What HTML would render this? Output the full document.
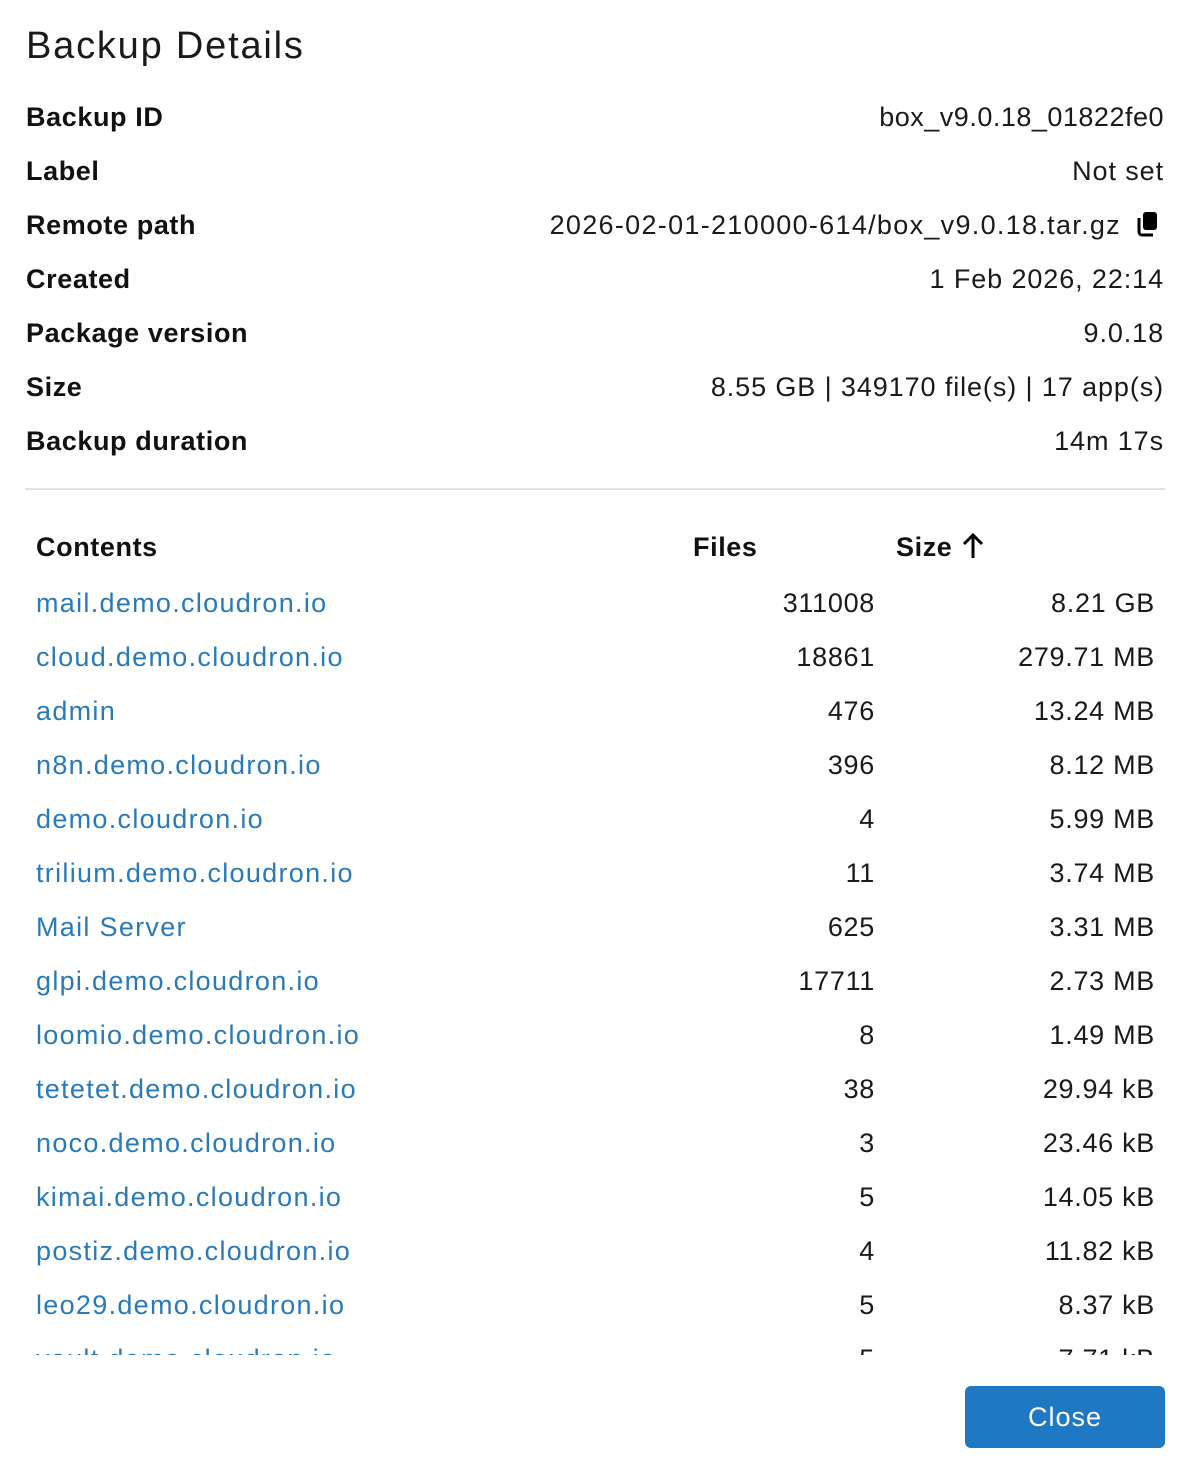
<!DOCTYPE html>
<html><head><meta charset="utf-8"><style>
body{margin:0;width:1189px;height:1470px;background:#fff;font-family:"Liberation Sans",sans-serif;color:#1a1a1a;position:relative;overflow:hidden}
.a{position:absolute;white-space:nowrap;font-size:27px;line-height:32px}
.t{left:26px;top:22px;font-size:38px;line-height:48px;letter-spacing:1.8px}
.l{left:26px;font-weight:bold;letter-spacing:0.6px;color:#111}.r{right:25px;text-align:right;letter-spacing:0.9px}
.hr{position:absolute;left:25px;width:1140px;top:488px;height:2px;background:#e2e2e2}
.clip{position:absolute;left:0;top:510px;width:1189px;height:845px;overflow:hidden}
.n{left:36px;color:#2a7ab8;letter-spacing:1.3px}.f{right:314px;text-align:right;letter-spacing:0.7px}.s{right:34px;text-align:right;letter-spacing:0.7px}
.h{font-weight:bold;letter-spacing:0.6px;color:#111}
.btn{position:absolute;left:965px;top:1386px;width:200px;height:62px;background:#1e78c2;border-radius:6px;color:#fff;font-size:27px;line-height:62px;text-align:center;letter-spacing:1px}
</style></head><body>
<div class="a t">Backup Details</div>
<div class="a l" style="top:101px">Backup ID</div><div class="a r" style="top:101px;letter-spacing:0.5px">box_v9.0.18_01822fe0</div>
<div class="a l" style="top:155px">Label</div><div class="a r" style="top:155px">Not set</div>
<div class="a l" style="top:209px">Remote path</div><div class="a r" style="top:209px;right:68px;letter-spacing:1.3px">2026-02-01-210000-614/box_v9.0.18.tar.gz</div>
<svg style="position:absolute;left:1134px;top:210px" width="28" height="28" viewBox="0 0 28 28"><rect x="9" y="2" width="14" height="18" rx="3" fill="#000"/><path d="M5 8v14a3 3 0 0 0 3 3h11" stroke="#000" stroke-width="3" fill="none"/></svg>
<div class="a l" style="top:263px">Created</div><div class="a r" style="top:263px">1 Feb 2026, 22:14</div>
<div class="a l" style="top:317px">Package version</div><div class="a r" style="top:317px">9.0.18</div>
<div class="a l" style="top:371px">Size</div><div class="a r" style="top:371px">8.55 GB | 349170 file(s) | 17 app(s)</div>
<div class="a l" style="top:425px">Backup duration</div><div class="a r" style="top:425px">14m 17s</div>
<div class="hr"></div>
<div class="clip">
<div class="a h" style="left:36px;top:21px">Contents</div>
<div class="a h" style="left:693px;top:21px">Files</div>
<div class="a h" style="left:896px;top:21px">Size <svg width="24" height="28" viewBox="0 0 24 28" style="vertical-align:-4px"><path d="M12 26V4M3 12l9-9 9 9" stroke="#000" stroke-width="3" fill="none"/></svg></div>
<div class="a n" style="top:77px">mail.demo.cloudron.io</div><div class="a f" style="top:77px">311008</div><div class="a s" style="top:77px">8.21 GB</div>
<div class="a n" style="top:131px">cloud.demo.cloudron.io</div><div class="a f" style="top:131px">18861</div><div class="a s" style="top:131px">279.71 MB</div>
<div class="a n" style="top:185px">admin</div><div class="a f" style="top:185px">476</div><div class="a s" style="top:185px">13.24 MB</div>
<div class="a n" style="top:239px">n8n.demo.cloudron.io</div><div class="a f" style="top:239px">396</div><div class="a s" style="top:239px">8.12 MB</div>
<div class="a n" style="top:293px">demo.cloudron.io</div><div class="a f" style="top:293px">4</div><div class="a s" style="top:293px">5.99 MB</div>
<div class="a n" style="top:347px">trilium.demo.cloudron.io</div><div class="a f" style="top:347px">11</div><div class="a s" style="top:347px">3.74 MB</div>
<div class="a n" style="top:401px">Mail Server</div><div class="a f" style="top:401px">625</div><div class="a s" style="top:401px">3.31 MB</div>
<div class="a n" style="top:455px">glpi.demo.cloudron.io</div><div class="a f" style="top:455px">17711</div><div class="a s" style="top:455px">2.73 MB</div>
<div class="a n" style="top:509px">loomio.demo.cloudron.io</div><div class="a f" style="top:509px">8</div><div class="a s" style="top:509px">1.49 MB</div>
<div class="a n" style="top:563px">tetetet.demo.cloudron.io</div><div class="a f" style="top:563px">38</div><div class="a s" style="top:563px">29.94 kB</div>
<div class="a n" style="top:617px">noco.demo.cloudron.io</div><div class="a f" style="top:617px">3</div><div class="a s" style="top:617px">23.46 kB</div>
<div class="a n" style="top:671px">kimai.demo.cloudron.io</div><div class="a f" style="top:671px">5</div><div class="a s" style="top:671px">14.05 kB</div>
<div class="a n" style="top:725px">postiz.demo.cloudron.io</div><div class="a f" style="top:725px">4</div><div class="a s" style="top:725px">11.82 kB</div>
<div class="a n" style="top:779px">leo29.demo.cloudron.io</div><div class="a f" style="top:779px">5</div><div class="a s" style="top:779px">8.37 kB</div>
<div class="a n" style="top:833px">vault.demo.cloudron.io</div><div class="a f" style="top:833px">5</div><div class="a s" style="top:833px">7.71 kB</div>
</div>
<div class="btn">Close</div>
</body></html>
